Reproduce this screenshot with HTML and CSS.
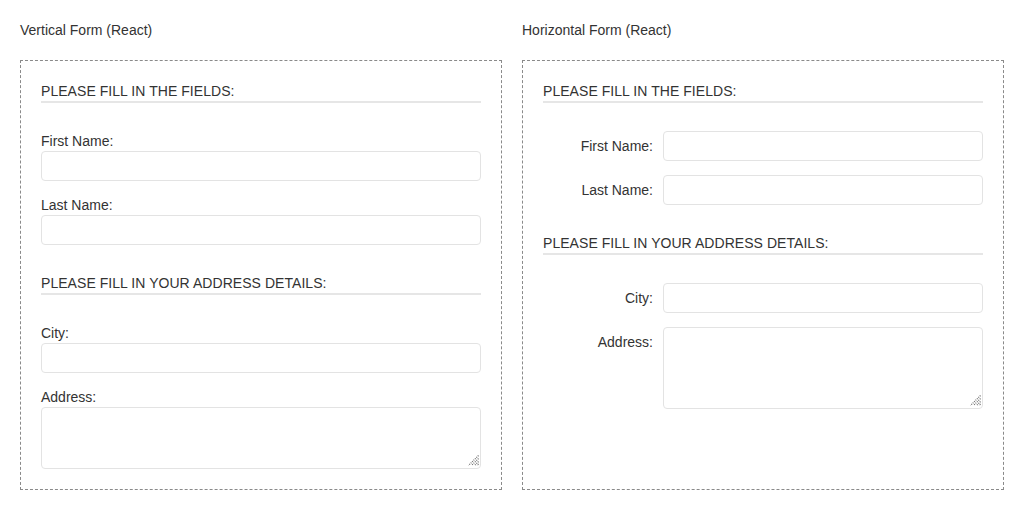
FILE: index.html
```html
<!DOCTYPE html>
<html>
<head>
<meta charset="utf-8">
<link rel="stylesheet" href="styles.css">
</head>
<body>
<div class="page">
  <div class="col">
    <div class="title">Vertical Form (React)</div>
    <form class="box vertical">
      <div class="heading">PLEASE FILL IN THE FIELDS:</div>
      <div class="fields">
        <label class="field"><span class="lbl">First Name:</span><input type="text"></label>
        <label class="field"><span class="lbl">Last Name:</span><input type="text"></label>
      </div>
      <div class="heading">PLEASE FILL IN YOUR ADDRESS DETAILS:</div>
      <div class="fields">
        <label class="field"><span class="lbl">City:</span><input type="text"></label>
        <label class="field"><span class="lbl">Address:</span>
          <span class="ta-wrap">
            <textarea class="ta-v"></textarea>
            <svg class="grip" width="11" height="11" viewBox="0 0 11 11"><path d="M10.5 0.5 L0.5 10.5 M10.5 3.5 L3.5 10.5 M10.5 6.5 L6.5 10.5 M10.5 9 L9 10.5" stroke="#6e6e6e" stroke-width="1.2" stroke-dasharray="1 1" fill="none"/></svg>
          </span>
        </label>
      </div>
    </form>
  </div>
  <div class="col">
    <div class="title">Horizontal Form (React)</div>
    <form class="box horizontal">
      <div class="heading">PLEASE FILL IN THE FIELDS:</div>
      <div class="fields">
        <label class="field"><span class="lbl">First Name:</span><input type="text"></label>
        <label class="field"><span class="lbl">Last Name:</span><input type="text"></label>
      </div>
      <div class="heading">PLEASE FILL IN YOUR ADDRESS DETAILS:</div>
      <div class="fields">
        <label class="field"><span class="lbl">City:</span><input type="text"></label>
        <label class="field"><span class="lbl">Address:</span>
          <span class="ta-wrap">
            <textarea class="ta-h"></textarea>
            <svg class="grip" width="11" height="11" viewBox="0 0 11 11"><path d="M10.5 0.5 L0.5 10.5 M10.5 3.5 L3.5 10.5 M10.5 6.5 L6.5 10.5 M10.5 9 L9 10.5" stroke="#6e6e6e" stroke-width="1.2" stroke-dasharray="1 1" fill="none"/></svg>
          </span>
        </label>
      </div>
    </form>
  </div>
</div>
</body>
</html>
```
FILE: styles.css
```css
* { box-sizing: border-box; }
html, body { margin: 0; padding: 0; background: #fff; }
body {
  font-family: "Liberation Sans", Arial, sans-serif;
  font-size: 14px;
  color: #333;
}
.page {
  display: flex;
  gap: 20px;
  padding: 20px;
}
.col {
  width: 482px;
  display: flex;
  flex-direction: column;
}
.title {
  height: 20px;
  line-height: 20px;
  margin-bottom: 20px;
}
.box {
  margin: 0;
  height: 430px;
  border: 1px dashed #8a8a8a;
  padding: 20px;
  display: flex;
  flex-direction: column;
}
.heading {
  line-height: 20px;
  letter-spacing: 0.05px;
  border-bottom: 2px solid #e6e6e6;
  margin-bottom: 28px;
}
.fields {
  display: flex;
  flex-direction: column;
  gap: 14px;
  margin-bottom: 28px;
}
.field { display: flex; }
.vertical .field { flex-direction: column; }
.vertical .lbl { line-height: 20px; }
.horizontal .field { flex-direction: row; gap: 10px; }
.horizontal .lbl {
  width: 110px;
  flex: none;
  text-align: right;
  line-height: 30px;
}
input, textarea {
  display: block;
  font: inherit;
  border: 1px solid #e3e3e3;
  border-radius: 4px;
  background: #fff;
  margin: 0;
  padding: 4px 8px;
  outline: none;
}
textarea { resize: none; }
input { height: 30px; width: 440px; }
.horizontal input, .horizontal textarea { width: 320px; }
.ta-wrap { position: relative; display: block; }
.grip {
  position: absolute;
  right: 2px;
  bottom: 3px;
  display: block;
}
.ta-v { width: 440px; height: 62px; }
.ta-h { height: 82px; }
```
